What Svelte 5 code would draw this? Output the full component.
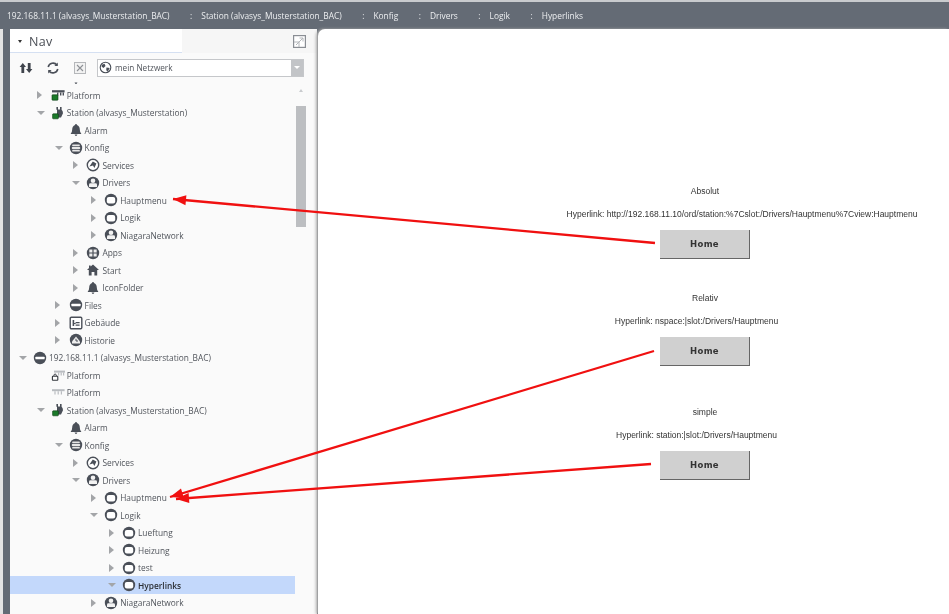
<script>
  const rows = [
    { d: 2, a: '', i: 'alarm', t: '' },
    { d: 1, a: 'r', i: 'platformLock', t: 'Platform' },
    { d: 1, a: 'd', i: 'station', t: 'Station (alvasys_Musterstation)' },
    { d: 2, a: '', i: 'alarm', t: 'Alarm' },
    { d: 2, a: 'd', i: 'konfig', t: 'Konfig' },
    { d: 3, a: 'r', i: 'services', t: 'Services' },
    { d: 3, a: 'd', i: 'drivers', t: 'Drivers' },
    { d: 4, a: 'r', i: 'folder', t: 'Hauptmenu' },
    { d: 4, a: 'r', i: 'folder', t: 'Logik' },
    { d: 4, a: 'r', i: 'drivers', t: 'NiagaraNetwork' },
    { d: 3, a: 'r', i: 'apps', t: 'Apps' },
    { d: 3, a: 'r', i: 'home', t: 'Start' },
    { d: 3, a: 'r', i: 'alarm', t: 'IconFolder' },
    { d: 2, a: 'r', i: 'files', t: 'Files' },
    { d: 2, a: 'r', i: 'building', t: 'Gebäude' },
    { d: 2, a: 'r', i: 'history', t: 'Historie' },
    { d: 0, a: 'd', i: 'files', t: '192.168.11.1 (alvasys_Musterstation_BAC)' },
    { d: 1, a: '', i: 'platformGrey', t: 'Platform' },
    { d: 1, a: '', i: 'platformPlain', t: 'Platform' },
    { d: 1, a: 'd', i: 'station', t: 'Station (alvasys_Musterstation_BAC)' },
    { d: 2, a: '', i: 'alarm', t: 'Alarm' },
    { d: 2, a: 'd', i: 'konfig', t: 'Konfig' },
    { d: 3, a: 'r', i: 'services', t: 'Services' },
    { d: 3, a: 'd', i: 'drivers', t: 'Drivers' },
    { d: 4, a: 'r', i: 'folder', t: 'Hauptmenu' },
    { d: 4, a: 'd', i: 'folder', t: 'Logik' },
    { d: 5, a: 'r', i: 'folder', t: 'Lueftung' },
    { d: 5, a: 'r', i: 'folder', t: 'Heizung' },
    { d: 5, a: 'r', i: 'folder', t: 'test' },
    { d: 5, a: 'd', i: 'folder', t: 'Hyperlinks', sel: true },
    { d: 4, a: 'r', i: 'drivers', t: 'NiagaraNetwork' }
  ];
  const crumbs = ['192.168.11.1 (alvasys_Musterstation_BAC)', 'Station (alvasys_Musterstation_BAC)', 'Konfig', 'Drivers', 'Logik', 'Hyperlinks'];
  const links = [
    { title: 'Absolut', shift: 74, link: 'Hyperlink: http://192.168.11.10/ord/station:%7Cslot:/Drivers/Hauptmenu%7Cview:Hauptmenu' },
    { title: 'Relativ', shift: -17, link: 'Hyperlink: nspace:|slot:/Drivers/Hauptmenu' },
    { title: 'simple', shift: -17, link: 'Hyperlink: station:|slot:/Drivers/Hauptmenu' }
  ];
  const arrows = [
    { x1: 655, y1: 243, x2: 173, y2: 199 },
    { x1: 654, y1: 351, x2: 170, y2: 497 },
    { x1: 651, y1: 464, x2: 176, y2: 499 }
  ];
  function head(a) {
    const ang = Math.atan2(a.y1 - a.y2, a.x1 - a.x2);
    const l = 13, w = 5;
    const bx = a.x2 + Math.cos(ang) * l, by = a.y2 + Math.sin(ang) * l;
    const nx = -Math.sin(ang) * w, ny = Math.cos(ang) * w;
    return `${a.x2},${a.y2} ${bx + nx},${by + ny} ${bx - nx},${by - ny}`;
  }
</script>

{#snippet icon(kind)}
  <svg class="ic" viewBox="0 0 14 14" width="14" height="14">
    {#if kind === 'folder'}
      <circle cx="7" cy="7" r="6.2" fill="#4a4f58"/>
      <rect x="2.8" y="3.9" width="8.4" height="6.6" rx="2" fill="#fff"/>
    {:else if kind === 'konfig'}
      <circle cx="7" cy="7" r="6.2" fill="#4a4f58"/>
      <rect x="3.2" y="3.4" width="7.6" height="1.8" rx=".6" fill="#e8e8e8"/>
      <rect x="2.8" y="6.1" width="8.4" height="1.8" rx=".6" fill="#e8e8e8"/>
      <rect x="3.2" y="8.8" width="7.6" height="1.8" rx=".6" fill="#e8e8e8"/>
    {:else if kind === 'files'}
      <circle cx="7" cy="7" r="6.2" fill="#4a4f58"/>
      <rect x="2.4" y="5.7" width="9.2" height="2.6" rx=".6" fill="#fff"/>
    {:else if kind === 'services'}
      <circle cx="7" cy="7" r="5.7" fill="#fff" stroke="#4a4f58" stroke-width="1.4"/>
      <path d="M3.4 8.4 L6.8 3.6 L10.4 5.4 L8.4 10 L7 7.6 Z" fill="#4a4f58"/>
    {:else if kind === 'drivers'}
      <circle cx="7" cy="7" r="6.2" fill="#4a4f58"/>
      <circle cx="7" cy="4.8" r="2.3" fill="#f2f2f2"/>
      <path d="M3 11 V8.6 Q3 7.2 4.5 7.2 H9.5 Q11 7.2 11 8.6 V11 Z" fill="#f2f2f2"/>
    {:else if kind === 'apps'}
      <circle cx="7" cy="7" r="6.2" fill="#4a4f58"/>
      <path d="M3.3 3.6H6.4V6.5H3.3ZM7.6 3.6H10.7V6.5H7.6ZM3.3 7.6H6.4V10.4H3.3ZM7.6 7.6H10.7V10.4H7.6Z" fill="#eee"/>
    {:else if kind === 'home'}
      <path d="M7 1.4 L13 7 H11.2 V12.6 H8.4 V9 H5.6 V12.6 H2.8 V7 H1 L3 5.1 V2.4 H4.6 V3.6 Z" fill="#4a4f58"/>
    {:else if kind === 'alarm'}
      <path d="M7 1 Q8 1 8 2 Q10.8 3 10.8 6.5 Q10.8 9 12.2 10.4 V11 H1.8 V10.4 Q3.2 9 3.2 6.5 Q3.2 3 6 2 Q6 1 7 1Z M5.6 11.6 H8.4 Q8.2 13 7 13 Q5.8 13 5.6 11.6Z" fill="#4a4f58"/>
    {:else if kind === 'building'}
      <rect x="1.2" y="1.2" width="11.6" height="11.6" rx="1.2" fill="#fff" stroke="#4a4f58" stroke-width="1.4"/>
      <path d="M3.6 4h1.6v6H3.6ZM6.6 6h4v1.2h-4ZM6.6 8.6h4v1.2h-4ZM5 7h1.6v1H5Z" fill="#4a4f58"/>
    {:else if kind === 'history'}
      <circle cx="7" cy="7" r="6.2" fill="#4a4f58"/>
      <path d="M3 10.6 V8.6 L7 3.4 L11 8.6 V10.6 Z" fill="#eee"/>
      <path d="M7 5.8 V8 H9" stroke="#4a4f58" stroke-width="1" fill="none"/>
    {:else if kind === 'station'}
      <path d="M5.4 1 H7 V3.6 H9 V1 H10.6 V3.8 Q12 5 12 7.2 L10 11.4 H6 V3.8 H5.4 Z" fill="#4a4f58"/>
      <rect x="1.6" y="7.8" width="5.8" height="5" rx=".7" fill="#1b7a2a" stroke="#0c3d14" stroke-width=".6"/>
    {:else if kind === 'platformLock'}
      <rect x="1" y="2.2" width="12.6" height="2.2" fill="#4a4f58"/>
      <path d="M6 4.4h1.4v3H6ZM9 4.4h1.4v3H9ZM11.6 4.4H13v3h-1.4Z" fill="#4a4f58"/>
      <rect x="1" y="6.8" width="6" height="5.4" rx=".6" fill="#1b7a2a" stroke="#0c3d14" stroke-width=".6"/>
    {:else if kind === 'platformGrey'}
      <rect x="3" y="2.6" width="11" height="2" fill="#b9bcc0"/>
      <path d="M7 4.6h1.2v3H7ZM9.6 4.6h1.2v3H9.6ZM12 4.6h1.2v3H12Z" fill="#b9bcc0"/>
      <rect x="1.4" y="8.2" width="5.4" height="4" rx=".5" fill="#fff" stroke="#33373d" stroke-width="1.1"/>
      <path d="M2.8 8 Q2.8 6 4.1 6 Q5.4 6 5.4 8" fill="none" stroke="#33373d" stroke-width=".9"/>
    {:else if kind === 'platformPlain'}
      <rect x="1" y="3.2" width="12.6" height="2" fill="#b9bcc0"/>
      <path d="M3.4 5.2h1.2v3.2H3.4ZM6.6 5.2h1.2v3.2H6.6ZM9.8 5.2H11v3.2H9.8Z" fill="#b9bcc0"/>
    {/if}
  </svg>
{/snippet}

<div class="shot">
  <header class="crumbs">
    {#each crumbs as c, n}
      {#if n > 0}<span class="sep">:</span>{/if}
      <span>{c}</span>
    {/each}
  </header>

  <div class="body">
    <aside class="side">
      <div class="tabs">
        <div class="tab"><span class="caret"></span><span class="navt">Nav</span></div>
        <svg class="expand" viewBox="0 0 13 13" width="13" height="13">
          <rect x=".6" y=".6" width="11.8" height="11.8" fill="#fff" stroke="#8a8e94" stroke-width="1.2"/>
          <path d="M3 10 L10 3 M6.5 3 H10 V6.5 M1 7 H6 V12" stroke="#b3b6ba" fill="none"/>
        </svg>
      </div>
      <div class="tools">
        <svg viewBox="0 0 14 12" width="14" height="12"><path d="M3.8 1 L7 5 H5.2 V11 H2.4 V5 H.6 Z M10.2 11 L13.4 7 H11.6 V1 H8.8 V7 H7 Z" fill="#3f444c"/></svg>
        <svg class="t2" viewBox="0 0 14 14" width="14" height="14"><path d="M2.2 6 A5 5 0 0 1 11 4 M11.8 8 A5 5 0 0 1 3 10" fill="none" stroke="#4a4f58" stroke-width="1.6"/><path d="M11.8 1.5 V5 H8.4Z M2.2 12.5 V9 H5.6Z" fill="#4a4f58"/></svg>
        <svg class="t3" viewBox="0 0 12 12" width="12" height="12"><rect x=".5" y=".5" width="11" height="11" fill="#f2f2f2" stroke="#b5b7ba"/><path d="M3 3 L9 9 M9 3 L3 9" stroke="#8d9095" stroke-width="1.1"/></svg>
        <div class="combo">
          <svg viewBox="0 0 14 14" width="13" height="13"><circle cx="7" cy="7" r="5.7" fill="#fff" stroke="#4a4f58" stroke-width="1.2"/><path d="M3 4 L6 3 L7 5.5 L4.8 7.5 L2.8 6ZM8 7 L11.5 7.5 L9.5 11.5 L7.8 10Z" fill="#4a4f58"/></svg>
          <span>mein Netzwerk</span>
          <b><i></i></b>
        </div>
      </div>
      <div class="treewrap">
        <ul class="tree">
          {#each rows as r}
            <li class:sel={r.sel} class="row" style="padding-left:{r.d * 17.8 + 9}px">
              <span class="arr {r.a}"></span>
              {@render icon(r.i)}
              <span class="lab">{r.t}</span>
            </li>
          {/each}
        </ul>
        <div class="scroll">
          <span class="up"></span>
          <span class="thumb"></span>
        </div>
      </div>
    </aside>

    <main class="view">
      {#each links as l}
        <section class="block">
          <p>{l.title}</p>
          <p class="lnk" style="margin-left:{l.shift}px">{l.link}</p>
          <button>Home</button>
        </section>
      {/each}
    </main>
  </div>

  <svg class="over" viewBox="0 0 949 614" width="949" height="614">
    {#each arrows as a}
      <line x1={a.x1} y1={a.y1} x2={a.x2} y2={a.y2} stroke="#f01010" stroke-width="2.3"/>
      <polygon points={head(a)} fill="#f01010"/>
    {/each}
  </svg>
</div>

<style>
  :global(body) { margin: 0; background: #646b75; }
  .shot { position: relative; width: 949px; height: 614px; overflow: hidden; background: #646b75; display: flex; flex-direction: column; filter: blur(.35px); font-family: "Open Sans", sans-serif; color: #50545b; }
  .crumbs { height: 29px; box-sizing: border-box; border-top: 2px solid #c9cbce; display: flex; align-items: center; padding-left: 7px; font-size: 8.4px; color: #eceef0; white-space: nowrap; flex: none; }
  .sep { margin: 0 9px 0 20.5px; }
  .body { flex: 1; display: flex; min-height: 0; border-left: 3px solid #e4e4e4; }
  .side { width: 307px; margin-left: 7px; background: #fafafa; border-radius: 6px 6px 0 0; display: flex; flex-direction: column; flex: none; }
  .tabs { height: 24px; display: flex; justify-content: space-between; align-items: center; padding-right: 11px; background: #f6f6f6; border-radius: 6px 0 0 0; flex: none; }
  .tab { width: 172px; height: 24px; background: #fff; border-bottom: 1px solid #d5e0f2; box-sizing: border-box; display: flex; align-items: center; padding: 1px 0 0 8px; gap: 7px; }
  .caret { width: 0; height: 0; border: 2px solid transparent; border-top: 3px solid #333; margin-top: 3px; }
  .navt { font-size: 12.5px; color: #4a4e55; letter-spacing: .3px; }
  .tools { height: 29px; display: flex; align-items: center; padding-left: 9px; flex: none; }
  .t2 { margin-left: 13px; }
  .t3 { margin-left: 14px; }
  .combo { margin-left: 11px; width: 207px; height: 18px; box-sizing: border-box; border: 1px solid #c5c7ca; background: #fff; display: flex; align-items: center; padding-left: 1px; gap: 3px; font-size: 8.2px; }
  .combo b { margin-left: auto; width: 12px; height: 16px; background: #c2c4c7; display: flex; align-items: center; justify-content: center; }
  .combo i { width: 0; height: 0; border: 3px solid transparent; border-top: 3px solid #fff; margin-top: 3px; }
  .treewrap { flex: 1; overflow: hidden; display: flex; min-height: 0; position: relative; }
  .tree { list-style: none; margin: -13.2px 0 0; padding: 0; width: 285px; flex: none; }
  .row { height: 17.5px; display: flex; align-items: center; box-sizing: border-box; font-size: 8.35px; white-space: nowrap; }
  .row.sel { background: #c3d8fb; font-weight: 600; color: #2c3036; }
  .arr { width: 8px; height: 8px; margin-right: 6px; flex: none; position: relative; }
  .arr.r::before { content: ""; position: absolute; left: .5px; top: 0; border: 4px solid transparent; border-left: 5px solid #a3a5a8; border-right: 0; }
  .arr.d::before { content: ""; position: absolute; left: 0; top: 2px; border: 4px solid transparent; border-top: 4px solid #a3a5a8; border-bottom: 0; }
  .ic { flex: none; margin-right: 2px; }
  .scroll { width: 11px; margin-left: 1px; position: relative; flex: none; }
  .up { position: absolute; left: 3px; top: 7px; border: 2.5px solid transparent; border-bottom: 3px solid #c9cbce; border-top: 0; }
  .thumb { position: absolute; left: 0; top: 24px; width: 10px; height: 121px; background: #bcbec1; }
  .view { flex: 1; margin-left: 1px; background: #fff; border-radius: 7px 0 0 0; display: flex; flex-direction: column; padding: 157px 0 0 242px; box-sizing: border-box; box-shadow: -2px 0 3px #aaa; }
  .block { width: 290px; display: flex; flex-direction: column; align-items: center; height: 107px; flex: none; font-family: "Liberation Sans", sans-serif; font-size: 8.5px; color: #333; }
  .block:nth-child(3) { margin-top: 7px; }
  .block p { margin: 0; height: 22.5px; line-height: 11px; white-space: nowrap; }
  .block .lnk { height: 21.5px; }
  button { width: 90px; height: 29px; background: #d0d0d0; border: 0; border-right: 1px solid #666; border-bottom: 1px solid #666; padding: 0; font: bold 8.5px "DejaVu Sans", sans-serif; color: #333; letter-spacing: .3px; flex: none; }
  .over { position: absolute; left: 0; top: 0; pointer-events: none; }
</style>
